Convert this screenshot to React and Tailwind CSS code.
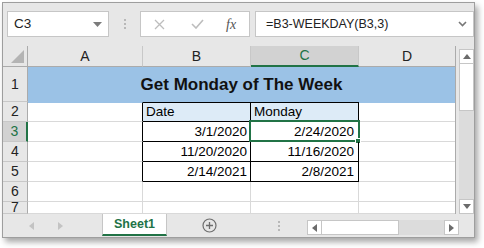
import React from "react";

const GREEN = "#217346";

const rows = [
  { n: 2, b: "Date", c: "Monday", head: true },
  { n: 3, b: "3/1/2020", c: "2/24/2020", sel: true },
  { n: 4, b: "11/20/2020", c: "11/16/2020" },
  { n: 5, b: "2/14/2021", c: "2/8/2021" },
];

const ColHead = ({ label, active, last }) => (
  <div
    className={
      "flex items-center justify-center text-[14px] " +
      (last ? "" : "border-r border-r-[#c8c8c8] ") +
      (active
        ? "bg-[#d2d2d2] text-[#217346] border-b-2 border-b-[#217346]"
        : "bg-[#e7e7e7] text-[#222] border-b border-b-[#ababab]")
    }
  >
    {label}
  </div>
);

const RowHead = ({ n, active }) => (
  <div
    className={
      "flex items-center justify-center text-[14px] border-b border-b-[#c8c8c8] overflow-hidden " +
      (active
        ? "bg-[#d2d2d2] text-[#217346] border-r-2 border-r-[#217346]"
        : "bg-[#e7e7e7] text-[#222] border-r border-r-[#ababab]")
    }
  >
    {n}
  </div>
);

export default function App() {
  return (
    <div className="w-[484px] h-[248px] bg-white pl-[2px] pt-[2px]" style={{ fontFamily: '"Liberation Sans", Arial, sans-serif' }}>
      <div className="w-[473px] h-[236px] border border-[#9e9e9e] bg-[#e7e7e7] flex flex-col shadow-[3px_4px_6px_rgba(0,0,0,0.35)]">
        {/* formula bar */}
        <div className="h-[43px] flex items-start pt-[8px] pl-[4px] shrink-0">
          <div className="w-[102px] h-[26px] bg-white border border-[#c6c6c6] flex items-center justify-between pl-[6px] pr-[6px]">
            <span className="text-[13.5px] text-[#222]">C3</span>
            <svg width="9" height="5" viewBox="0 0 9 5"><path d="M0 0h9L4.5 5z" fill="#7b7b7b" /></svg>
          </div>
          <div className="w-[31px] h-[26px] flex flex-col items-center justify-center gap-[2px]">
            <span className="w-[2px] h-[2px] bg-[#b8b8b8]" />
            <span className="w-[2px] h-[2px] bg-[#b8b8b8]" />
            <span className="w-[2px] h-[2px] bg-[#b8b8b8]" />
          </div>
          <div className="w-[110px] h-[26px] bg-white border border-[#c6c6c6] flex items-center">
            <svg className="ml-[13px]" width="11" height="11" viewBox="0 0 11 11"><path d="M1 1l9 9M10 1l-9 9" stroke="#bdbdbd" strokeWidth="1.3" /></svg>
            <svg className="ml-[26px]" width="13" height="10" viewBox="0 0 13 10"><path d="M1 5l4 4 7-8" stroke="#bdbdbd" strokeWidth="1.6" fill="none" /></svg>
            <span className="ml-[22px] text-[14px] italic text-[#555]" style={{ fontFamily: '"Liberation Serif", serif' }}>fx</span>
          </div>
          <div className="w-[219px] h-[26px] ml-[5px] bg-white border border-[#c6c6c6] flex items-center justify-between pl-[10px] pr-[6px]">
            <span className="text-[12.5px] text-[#222]">=B3-WEEKDAY(B3,3)</span>
            <svg width="9" height="6" viewBox="0 0 9 6"><path d="M1 1l3.5 3.5L8 1" stroke="#777" strokeWidth="1.6" fill="none" /></svg>
          </div>
        </div>

        {/* grid + vertical scrollbar */}
        <div className="h-[168px] flex shrink-0">
          <div className="w-[453px] border-r border-r-[#ababab] grid grid-cols-[25px_115px_108px_108px_96px] grid-rows-[21px_35px_20px_20px_20px_20px_20px_12px] bg-white overflow-hidden">
            {/* corner */}
            <div className="bg-[#e7e7e7] border-r border-r-[#ababab] border-b border-b-[#ababab] flex items-end justify-end pr-[3px] pb-[3px]">
              <svg width="13" height="13" viewBox="0 0 13 13"><path d="M13 0v13H0z" fill="#b4b4b4" /></svg>
            </div>
            <ColHead label="A" />
            <ColHead label="B" />
            <ColHead label="C" active />
            <ColHead label="D" last />

            {/* row 1 */}
            <RowHead n={1} />
            <div className="col-span-4 bg-[#9bc2e6] flex items-center justify-center text-[17px] font-bold text-[#111]">
              Get Monday of The Week
            </div>

            {rows.map((r) => (
              <React.Fragment key={r.n}>
                <RowHead n={r.n} active={r.sel} />
                <div
                  className={
                    "border-r border-r-black border-b border-b-[#d9d9d9] " +
                    (r.head ? "border-t border-t-[#9bc2e6]" : "")
                  }
                />
                <div
                  className={
                    "border-r border-r-black border-b border-b-black flex items-end text-[13.5px] text-black leading-[17px] pb-[1px] " +
                    (r.head ? "border-t border-t-black bg-[#ddebf7] justify-start pl-[3px]" : "justify-end pr-[3px]")
                  }
                >
                  {r.b}
                </div>
                <div
                  className={
                    "relative border-r border-r-black border-b border-b-black flex items-end text-[13.5px] text-black leading-[17px] pb-[1px] " +
                    (r.head ? "border-t border-t-black bg-[#ddebf7] justify-start pl-[3px]" : "justify-end pr-[4px]")
                  }
                >
                  {r.c}
                  {r.sel && (
                    <>
                      <div className="absolute -left-[2px] -top-[2px] -right-[2px] -bottom-[1px] border-2 border-[#217346]" />
                      <div className="absolute -right-[3px] -bottom-[3px] w-[6px] h-[6px] bg-[#217346] border border-white" />
                    </>
                  )}
                </div>
                <div className={"border-b border-b-[#d9d9d9] " + (r.head ? "border-t border-t-[#9bc2e6]" : "")} />
              </React.Fragment>
            ))}

            {[6, 7].map((n) => (
              <React.Fragment key={n}>
                <RowHead n={n} />
                <div className="border-r border-r-[#d9d9d9] border-b border-b-[#d9d9d9]" />
                <div className="border-r border-r-[#d9d9d9] border-b border-b-[#d9d9d9]" />
                <div className="border-r border-r-[#d9d9d9] border-b border-b-[#d9d9d9]" />
                <div className="border-b border-b-[#d9d9d9]" />
              </React.Fragment>
            ))}
          </div>

          {/* vertical scrollbar */}
          <div className="w-[18px] flex justify-end pt-[3px]">
            <div className="w-[15px] h-full flex flex-col bg-[#dcdcdc]">
              <div className="h-[15px] bg-white border border-[#c6c6c6] flex items-center justify-center">
                <svg width="8" height="5" viewBox="0 0 8 5"><path d="M4 0l4 5H0z" fill="#6b6b6b" /></svg>
              </div>
              <div className="h-[47px] bg-white border border-[#c6c6c6] border-t-0" />
              <div className="flex-1" />
              <div className="h-[15px] bg-white border border-[#c6c6c6] flex items-center justify-center">
                <svg width="8" height="5" viewBox="0 0 8 5"><path d="M0 0h8L4 5z" fill="#6b6b6b" /></svg>
              </div>
            </div>
          </div>
        </div>

        {/* sheet tabs */}
        <div className="h-[23px] flex items-start shrink-0">
          <div className="w-[99px] h-full flex items-center">
            <svg className="ml-[26px]" width="5" height="8" viewBox="0 0 5 8"><path d="M5 0v8L0 4z" fill="#c3c3c3" /></svg>
            <svg className="ml-[24px]" width="5" height="8" viewBox="0 0 5 8"><path d="M0 0v8l5-4z" fill="#c3c3c3" /></svg>
          </div>
          <div className="w-[65px] h-[22px] bg-white border-x border-x-[#c6c6c6] border-b-2 border-b-[#217346] flex items-center justify-center text-[12.5px] font-bold text-[#217346]">
            Sheet1
          </div>
          <div className="w-[84px] h-full flex items-center justify-center">
            <svg width="15" height="15" viewBox="0 0 15 15">
              <circle cx="7.5" cy="7.5" r="6.5" stroke="#6e6e6e" strokeWidth="1.2" fill="none" />
              <path d="M7.5 4v7M4 7.5h7" stroke="#6e6e6e" strokeWidth="1.3" />
            </svg>
          </div>
          <div className="w-[56px] h-full flex flex-col items-center justify-center gap-[2px]">
            <span className="w-[2px] h-[2px] bg-[#b8b8b8]" />
            <span className="w-[2px] h-[2px] bg-[#b8b8b8]" />
            <span className="w-[2px] h-[2px] bg-[#b8b8b8]" />
          </div>
          <div className="mt-[6px] h-[15px] w-[152px] flex bg-[#dcdcdc]">
            <div className="w-[15px] h-full bg-white border border-[#c6c6c6] flex items-center justify-center">
              <svg width="5" height="8" viewBox="0 0 5 8"><path d="M5 0v8L0 4z" fill="#6b6b6b" /></svg>
            </div>
            <div className="w-[77px] h-full bg-white border border-[#c6c6c6] border-l-0" />
            <div className="flex-1" />
            <div className="w-[15px] h-full bg-white border border-[#c6c6c6] flex items-center justify-center">
              <svg width="5" height="8" viewBox="0 0 5 8"><path d="M0 0v8l5-4z" fill="#6b6b6b" /></svg>
            </div>
          </div>
        </div>
      </div>
    </div>
  );
}
